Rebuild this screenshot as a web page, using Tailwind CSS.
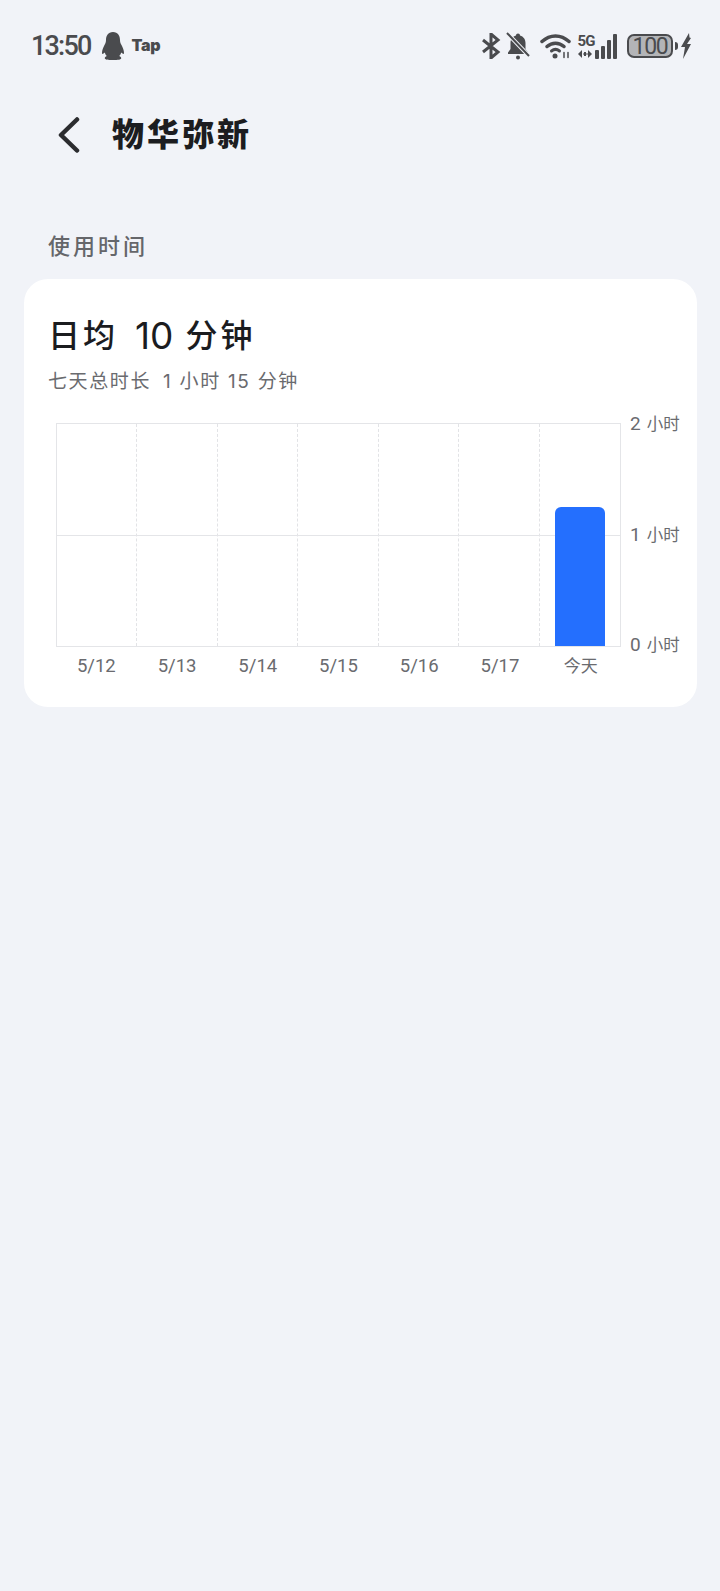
<!DOCTYPE html>
<html lang="en">
<head>
    <meta charset="utf-8">
    <title>物华弥新</title>
    <script src="https://cdn.jsdelivr.net/npm/@tailwindcss/browser@4"></script>
</head>
<body class="bg-[#f1f3f8] font-['Roboto','Noto_Sans_CJK_SC',sans-serif]">
    <div class="w-[720px] h-[1591px] overflow-hidden">
        <!-- status bar -->
        <div class="h-[46px] pt-[23px] box-content flex items-center justify-between pl-[31px] pr-[28px] text-[#4a4b4e]">
            <div class="flex items-center">
                <span class="text-[27px] font-medium tracking-[-1.8px] leading-none">13:50</span>
                <svg class="ml-[10px]" width="24" height="28" viewBox="0 0 24 28" fill="#4a4b4e">
                    <path d="M12 0C7 0 5 4 5 8c0 2-.4 3-1.500 5C2.200 15.500 1 18.500 1 21c0 1 .6 1.300 1.500.6l1.300-1.200c.4 1.500 1 2.600 2 3.600-1.300.6-2 1.300-2 2.200C3.800 27.500 7 28 12 28s8.200-.5 8.200-1.800c0-.9-.7-1.600-2-2.200 1-1 1.600-2.100 2-3.600l1.300 1.200c.9.700 1.500.4 1.500-.6 0-2.500-1.200-5.500-2.500-8C19.400 11 19 10 19 8c0-4-2-8-7-8z"/>
                </svg>
                <span class="ml-[7px] -mt-[2px] text-[16px] font-black tracking-[-0.3px] leading-none font-['Inter',sans-serif]">Tap</span>
            </div>
            <div class="flex items-center">
                <svg width="20" height="26" viewBox="0 0 20 26" fill="none" stroke="#4a4b4e" stroke-width="3">
                    <path d="M2 7l15 12-7 6V1l7 6L2 19"/>
                </svg>
                <svg class="ml-[4px]" width="26" height="28" viewBox="0 0 26 28">
                    <path d="M13 1.500c-1.200 0-2 .8-2 2C7.500 4.500 5.500 7.500 5.500 11v6L3 20.500V22h20v-1.500L20.500 17v-6c0-3.500-2-6.500-5.500-7.500 0-1.200-.8-2-2-2z" fill="#4a4b4e"/>
                    <circle cx="13" cy="25.500" r="2" fill="#4a4b4e"/>
                    <path d="M2 1l22 23" stroke="#f1f3f8" stroke-width="4"/>
                    <path d="M2 1l22 23" stroke="#4a4b4e" stroke-width="2"/>
                </svg>
                <svg class="ml-[9px]" width="32" height="26" viewBox="0 0 32 26" fill="none" stroke="#4a4b4e" stroke-width="3.500" stroke-linecap="round">
                    <path d="M2 8.500C10 1 21 1 29 8.500"/>
                    <path d="M7 13.500c5-4.500 12-4.500 17 0"/>
                    <path d="M11.500 18c2.500-2 5.500-2 8 0" stroke-width="3"/>
                    <circle cx="15" cy="23" r="2.500" fill="#4a4b4e" stroke="none"/>
                    <path d="M24 19.500v5M28 19.500v5" stroke-width="1.500"/>
                </svg>
                <div class="ml-[5px] w-[18px] flex flex-col items-center">
                    <span class="text-[15px] font-bold leading-[14px] tracking-[-0.8px]">5G</span>
                    <svg class="mt-[2px]" width="16" height="8" viewBox="0 0 16 8" fill="#4a4b4e">
                        <path d="M4 0v8L0 4zM6 2h2v4H6zM10 0l4 4-4 4zM5 3.500h6v1H5z"/>
                    </svg>
                </div>
                <svg class="mt-[1px]" width="22" height="25" viewBox="0 0 22 25" fill="#4a4b4e">
                    <rect x="0" y="16" width="4" height="9" rx="1"/>
                    <rect x="6" y="12" width="4" height="13" rx="1"/>
                    <rect x="12" y="6" width="4" height="19" rx="1"/>
                    <rect x="18" y="0" width="4" height="25" rx="1"/>
                </svg>
                <div class="ml-[10px] w-[46px] h-[24px] rounded-[7px] border-2 border-[#4a4b4e] bg-[#b3b4b7] flex items-center justify-center text-[23px] leading-none tracking-[-1.2px]">100</div>
                <div class="ml-[2px] w-[3px] h-[8px] rounded-r-sm bg-[#4a4b4e]"></div>
                <svg class="ml-[2px]" width="12" height="26" viewBox="0 0 12 26" fill="#4a4b4e">
                    <path d="M9 0L1 14h4l-2 12 8-15H7l4-6-1.500-.5z"/>
                </svg>
            </div>
        </div>

        <!-- title row -->
        <div class="mt-[41px] h-[50px] flex items-center pl-[58px]">
            <svg width="22" height="36" viewBox="0 0 22 36" fill="none" stroke="#2b2c2f" stroke-width="4.500" stroke-linecap="round" stroke-linejoin="round">
                <path d="M19 2.500L3 18l16 15.500"/>
            </svg>
            <h1 class="ml-[32px] text-[32px] font-black text-[#1c1d20] tracking-[3px] leading-none">物华弥新</h1>
        </div>

        <div class="mt-[71px] pl-[48px] text-[22px] leading-[32px] font-medium text-[#65666a] tracking-[3px]">使用时间</div>

        <!-- card -->
        <div class="mt-[16px] ml-[24px] w-[673px] h-[428px] bg-white rounded-[24px] pt-[35px] pl-[24px]">
            <div class="text-[32px] leading-[44px] text-[#1b1c1f] font-medium flex">
                <span class="tracking-[3px]">日均</span>
                <span class="ml-[17px] text-[37px] font-['Inter',sans-serif] font-normal">10</span>
                <span class="ml-[12px] tracking-[3px]">分钟</span>
            </div>
            <div class="mt-[10px] text-[19px] leading-[28px] text-[#6a6b6f] flex">
                <span class="tracking-[1.600px]">七天总时长</span>
                <span class="ml-[12px] tracking-[1.700px] font-['Inter','Noto_Sans_CJK_SC',sans-serif]">1 小时 15 分钟</span>
            </div>

            <!-- chart -->
            <div class="mt-[27px] ml-[8px] flex">
                <div>
                    <div class="relative w-[565px] h-[224px] grid grid-cols-7 border border-[#e4e5e8]">
                        <div class="border-r border-dashed border-[#e2e3e6]"></div>
                        <div class="border-r border-dashed border-[#e2e3e6]"></div>
                        <div class="border-r border-dashed border-[#e2e3e6]"></div>
                        <div class="border-r border-dashed border-[#e2e3e6]"></div>
                        <div class="border-r border-dashed border-[#e2e3e6]"></div>
                        <div class="border-r border-dashed border-[#e2e3e6]"></div>
                        <div class="flex items-end justify-center">
                            <div class="relative z-10 w-[50px] h-[139px] bg-[#246ffe] rounded-t-[6px]"></div>
                        </div>
                        <div class="absolute left-0 right-0 top-[111px] h-px bg-[#e4e5e8]"></div>
                    </div>
                    <div class="grid grid-cols-7 w-[565px] mt-[6px] text-[18.500px] leading-[26px] text-[#6a6b6f] text-center">
                        <span>5/12</span>
                        <span>5/13</span>
                        <span>5/14</span>
                        <span>5/15</span>
                        <span>5/16</span>
                        <span>5/17</span>
                        <span class="text-[17px]">今天</span>
                    </div>
                </div>
                <div class="ml-[9px] flex flex-col justify-between text-[#6a6b6f] text-[16.500px] leading-[24px] relative -top-[11px] h-[246px]">
                    <span class="whitespace-nowrap"><span class="text-[19px] mr-[6px]">2</span>小时</span>
                    <span class="whitespace-nowrap"><span class="text-[19px] mr-[6px]">1</span>小时</span>
                    <span class="whitespace-nowrap"><span class="text-[19px] mr-[6px]">0</span>小时</span>
                </div>
            </div>
        </div>
    </div>
</body>
</html>
